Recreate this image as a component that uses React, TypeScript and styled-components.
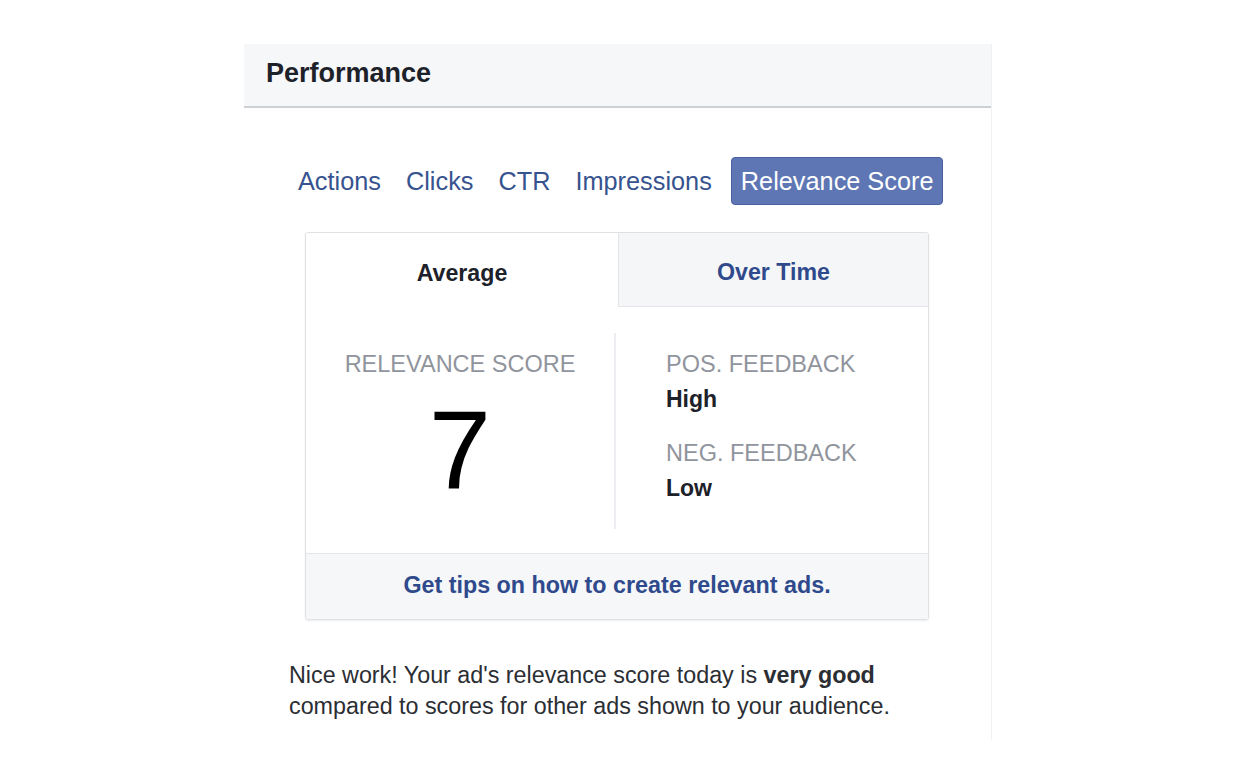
import styled, { createGlobalStyle } from 'styled-components';

const GlobalStyle = createGlobalStyle`
  html, body {
    margin: 0;
    background: #ffffff;
    font-family: "Liberation Sans", Arial, Helvetica, sans-serif;
    color: #1d2129;
  }
`;

const Page = styled.div`
  padding: 44px 0 0 244px;
  height: 774px;
  box-sizing: border-box;
`;

const Panel = styled.section`
  width: 748px;
  height: 696px;
  border-right: 1px solid #f0f1f3;
  box-sizing: border-box;
`;

const Header = styled.header`
  display: flex;
  align-items: center;
  height: 64px;
  padding: 0 22px 3px;
  background: #f6f7f9;
  border-bottom: 2px solid #cdd0d4;
  box-sizing: border-box;
  font-size: 27px;
  font-weight: bold;
  color: #1d2129;
`;

const MetricNav = styled.nav`
  display: flex;
  align-items: center;
  gap: 3px;
  margin: 49px 0 0 43px;
`;

const MetricTab = styled.a<{ $active?: boolean }>`
  display: flex;
  align-items: center;
  height: 48px;
  padding: 0 ${(p) => (p.$active ? '9px' : '10px')};
  margin-left: ${(p) => (p.$active ? '5px' : '0')};
  box-sizing: border-box;
  border-radius: 4px;
  font-size: 25.3px;
  color: ${(p) => (p.$active ? '#ffffff' : '#37538f')};
  background: ${(p) => (p.$active ? '#5e76b4' : 'transparent')};
  border: 1px solid ${(p) => (p.$active ? '#4a62a2' : 'transparent')};
  cursor: pointer;
`;

const Card = styled.div`
  width: 624px;
  margin: 27px 0 0 61px;
  border: 1px solid #dfe1e5;
  border-radius: 3px;
  box-shadow: 0 1px 2px rgba(0, 0, 0, 0.08);
  box-sizing: border-box;
  overflow: hidden;
`;

const ViewTabs = styled.div`
  display: grid;
  grid-template-columns: 312px 1fr;
  height: 74px;
`;

const ViewTab = styled.div<{ $active?: boolean }>`
  display: flex;
  align-items: center;
  justify-content: center;
  padding-top: 6px;
  box-sizing: border-box;
  font-size: 23.2px;
  font-weight: bold;
  color: ${(p) => (p.$active ? '#1d2129' : '#2f4a8c')};
  background: ${(p) => (p.$active ? '#ffffff' : '#f5f6f8')};
  border-left: ${(p) => (p.$active ? 'none' : '1px solid #e3e5e8')};
  border-bottom: ${(p) => (p.$active ? 'none' : '1px solid #e3e5e8')};
`;

const Body = styled.div`
  display: grid;
  grid-template-columns: 310px 1fr;
  height: 246px;
  padding: 26px 0 29px;
  box-sizing: border-box;
`;

const ScoreColumn = styled.div`
  display: flex;
  flex-direction: column;
  align-items: center;
  border-right: 2px solid #eceef1;
  padding-top: 18px;
`;

const Label = styled.div`
  font-size: 23.5px;
  color: #90949c;
  line-height: 26px;
`;

const Score = styled.div`
  font-size: 112px;
  line-height: 1;
  margin-top: 17px;
  color: #000000;
`;

const FeedbackColumn = styled.div`
  display: flex;
  flex-direction: column;
  padding: 18px 0 0 50px;
`;

const Value = styled.div`
  font-size: 23px;
  font-weight: bold;
  line-height: 24px;
  margin-top: 10px;
  margin-bottom: 29px;
  color: #1d2129;
`;

const Footer = styled.div`
  display: flex;
  align-items: center;
  justify-content: center;
  height: 66px;
  background: #f6f7f9;
  border-top: 1px solid #e3e5e8;
  box-sizing: border-box;
  padding-bottom: 3px;
  font-size: 23.3px;
  font-weight: bold;
  color: #2f4a8c;
`;

const Summary = styled.p`
  margin: 40px 0 0 45px;
  font-size: 23.3px;
  line-height: 31px;
  color: #2b2e33;
`;

const metrics = ['Actions', 'Clicks', 'CTR', 'Impressions', 'Relevance Score'];

const App = () => {
  return (
    <>
      <GlobalStyle />
      <Page>
        <Panel>
          <Header>Performance</Header>

          <MetricNav>
            {metrics.map((m) => (
              <MetricTab key={m} $active={m === 'Relevance Score'}>
                {m}
              </MetricTab>
            ))}
          </MetricNav>

          <Card>
            <ViewTabs>
              <ViewTab $active>Average</ViewTab>
              <ViewTab>Over Time</ViewTab>
            </ViewTabs>

            <Body>
              <ScoreColumn>
                <Label>RELEVANCE SCORE</Label>
                <Score>7</Score>
              </ScoreColumn>

              <FeedbackColumn>
                <Label>POS. FEEDBACK</Label>
                <Value>High</Value>
                <Label>NEG. FEEDBACK</Label>
                <Value>Low</Value>
              </FeedbackColumn>
            </Body>

            <Footer>Get tips on how to create relevant ads.</Footer>
          </Card>

          <Summary>
            Nice work! Your ad's relevance score today is <b>very good</b>
            <br />
            compared to scores for other ads shown to your audience.
          </Summary>
        </Panel>
      </Page>
    </>
  );
};

export default App;
